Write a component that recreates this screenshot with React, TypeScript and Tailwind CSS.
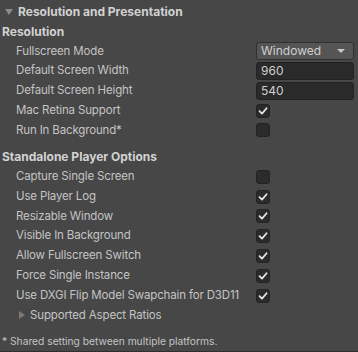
import React from "react";

const font = { fontFamily: "Inter, 'Noto Sans', sans-serif" };

function Check({ on }: { on: boolean }) {
  return (
    <div className="w-[14px] h-[14px] rounded-[3px] bg-[#2b2b2b] border border-[#222] flex items-center justify-center">
      {on && (
        <svg width="10" height="10" viewBox="0 0 10 10">
          <path d="M1.5 5.2 L4 7.6 L8.6 2.2" fill="none" stroke="#e6e6e6" strokeWidth="1.7" strokeLinecap="round" strokeLinejoin="round" />
        </svg>
      )}
    </div>
  );
}

function Row({ label, children }: { label: string; children?: React.ReactNode }) {
  return (
    <div className="h-5 flex items-center">
      <div className="w-[256px] pl-4 text-[#c4c4c4] text-[11.5px] tracking-[-0.15px] whitespace-nowrap">{label}</div>
      <div className="flex-1 flex items-center">{children}</div>
    </div>
  );
}

const player: [string, boolean][] = [
  ["Capture Single Screen", false],
  ["Use Player Log", true],
  ["Resizable Window", true],
  ["Visible In Background", true],
  ["Allow Fullscreen Switch", true],
  ["Force Single Instance", true],
  ["Use DXGI Flip Model Swapchain for D3D11", true],
];

export default function App() {
  return (
    <div className="w-[358px] h-[352px] bg-[#474747] text-[12px] leading-none overflow-hidden flex flex-col" style={font}>
      <div className="h-[22px] flex items-center gap-[5px] pl-[5px] pt-[3px]">
        <svg width="8" height="8" viewBox="0 0 8 8">
          <path d="M0 1 L8 1 L4 7 Z" fill="#8a8a8a" />
        </svg>
        <span className="font-bold text-[#d2d2d2]">Resolution and Presentation</span>
      </div>
      <div className="h-5 flex items-center pl-[2px] font-bold text-[#d2d2d2]">Resolution</div>
      <Row label="Fullscreen Mode">
        <div className="w-[98px] h-[18px] rounded-[3px] bg-[#555] border border-[#303030] flex items-center justify-between pl-1 pr-2 text-[#d0d0d0]">
          <span>Windowed</span>
          <svg width="8" height="6" viewBox="0 0 8 6">
            <path d="M0 1 L8 1 L4 5 Z" fill="#c8c8c8" />
          </svg>
        </div>
      </Row>
      <Row label="Default Screen Width">
        <div className="w-[98px] h-[18px] rounded-[3px] bg-[#2a2a2a] border border-[#222] flex items-center pl-1 text-[#d0d0d0]">960</div>
      </Row>
      <Row label="Default Screen Height">
        <div className="w-[98px] h-[18px] rounded-[3px] bg-[#2a2a2a] border border-[#222] flex items-center pl-1 text-[#d0d0d0]">540</div>
      </Row>
      <Row label="Mac Retina Support">
        <Check on />
      </Row>
      <Row label="Run In Background*">
        <Check on={false} />
      </Row>
      <div className="h-[7px]" />
      <div className="h-5 flex items-center pl-[2px] font-bold text-[#d2d2d2]">Standalone Player Options</div>
      {player.map(([l, on]) => (
        <Row key={l} label={l}>
          <Check on={on} />
        </Row>
      ))}
      <div className="h-5 flex items-center gap-[4px] pl-[18px] text-[#c4c4c4] text-[11.5px] tracking-[-0.15px]">
        <svg width="8" height="8" viewBox="0 0 8 8">
          <path d="M1 0 L7 4 L1 8 Z" fill="#7a7a7a" />
        </svg>
        <span>Supported Aspect Ratios</span>
      </div>
      <div className="h-[20px] flex items-center pl-[2px] text-[10.25px] text-[#c4c4c4] mt-[6px]">
        * Shared setting between multiple platforms.
      </div>
      <div className="h-px bg-[#2e2e2e]" />
    </div>
  );
}
